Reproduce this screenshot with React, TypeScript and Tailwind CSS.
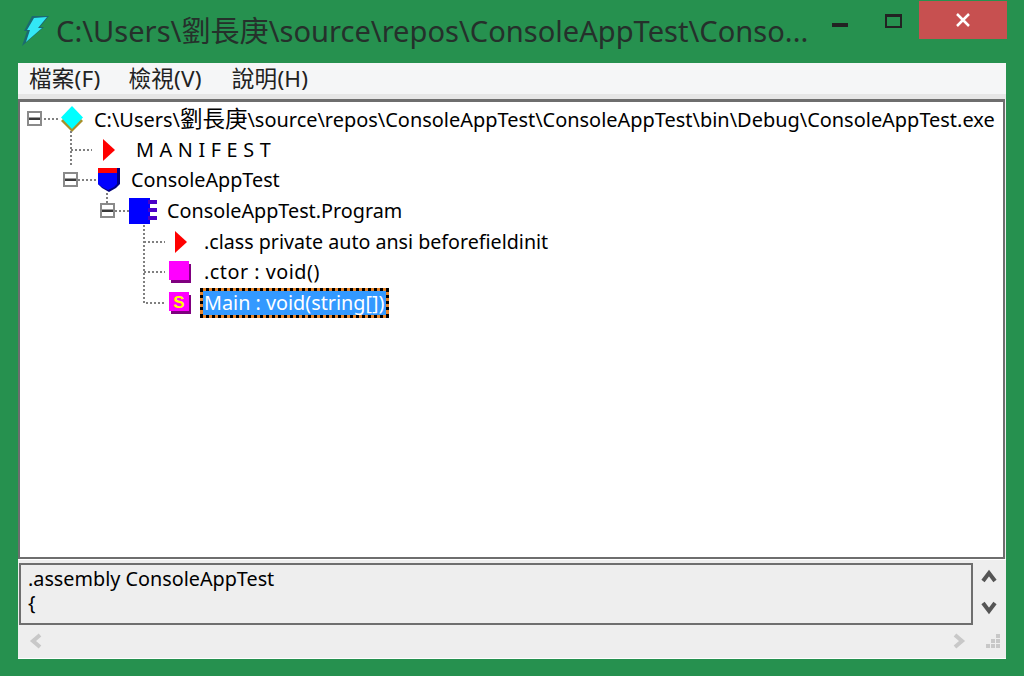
import React from "react";

const rowText = "text-[19.800px] leading-[24px] text-black whitespace-nowrap";

function Minus() {
  return (
    <svg width="16" height="16" viewBox="0 0 16 16" className="shrink-0">
      <rect x="1" y="1" width="13" height="13" fill="#fff" stroke="#8a8a8a" strokeWidth="2" />
      <rect x="2" y="6.500" width="11" height="2.500" fill="#3a3a3a" />
    </svg>
  );
}

function Diamond() {
  return (
    <svg width="24" height="26" viewBox="0 0 24 26">
      <path d="M12 4 L23 15 L12 26 L1 15 Z" fill="#a89028" />
      <path d="M12 0 L23 11.500 L12 23 L1 11.500 Z" fill="#00ffff" />
    </svg>
  );
}

function Arrow() {
  return (
    <svg width="12" height="22" viewBox="0 0 12 22">
      <path d="M0 0 L12 11 L0 22 Z" fill="#ff0000" />
    </svg>
  );
}

function Shield() {
  return (
    <svg width="24" height="26" viewBox="0 0 24 26">
      <path d="M1 1 H23 V17 L19 21 L12 25 L5 21 L1 17 Z" fill="#00007f" />
      <path d="M1 1 H20 V17 L17 20 L11 23 L5 20 L1 17 Z" fill="#0000ff" />
      <rect x="1" y="1" width="19" height="5" fill="#ff0000" />
    </svg>
  );
}

function ClassIcon() {
  return (
    <svg width="30" height="28" viewBox="0 0 30 28">
      <rect x="1" y="1" width="21" height="26" fill="#0000ff" />
      <rect x="20" y="3" width="9" height="4" fill="#4a00c8" />
      <rect x="20" y="11" width="9" height="4" fill="#4a00c8" />
      <rect x="20" y="19" width="9" height="4" fill="#4a00c8" />
    </svg>
  );
}

function Method({ statik }: { statik?: boolean }) {
  return (
    <svg width="22" height="22" viewBox="0 0 22 22">
      <rect x="2" y="3" width="20" height="19" fill="#7f007f" />
      <rect x="0" y="0" width="20" height="19" fill="#ff00ff" />
      {statik && (
        <text x="10" y="15.500" textAnchor="middle" fontSize="17" fontWeight="700" fill="#ffff00" fontFamily="Liberation Sans, sans-serif">
          S
        </text>
      )}
    </svg>
  );
}

function TreeLines() {
  return (
    <svg width="300" height="230" viewBox="0 0 300 230" className="absolute left-0 top-0 pointer-events-none">
      <g stroke="#808080" strokeWidth="2" strokeDasharray="2 2" fill="none">
        <path d="M24 17 H40" />
        <path d="M51 29 V64 M51 48 H72" />
        <path d="M58 78 H76" />
        <path d="M87 91 V103 M95 109 H109" />
        <path d="M124 123 V201 H145 M124 140 H145 M124 170 H145" />
      </g>
    </svg>
  );
}

function Row({ pad, icon, iconW, gap, children, minus }: { pad: string; icon: React.ReactNode; iconW: string; gap: string; children: React.ReactNode; minus?: boolean }) {
  return (
    <div className={`h-[30.600px] flex items-center ${pad}`}>
      {minus && <Minus />}
      <div className={`flex justify-center items-center shrink-0 ${iconW} ${gap}`}>{icon}</div>
      {children}
    </div>
  );
}

export default function App() {
  return (
    <div className="w-[1024px] h-[676px] bg-[#26914f] flex flex-col overflow-hidden" style={{ fontFamily: '"Noto Sans", "Noto Sans CJK TC", sans-serif' }}>
      <div className="h-[63px] shrink-0 flex items-start relative">
        <svg width="30" height="32" viewBox="0 0 30 32" className="ml-[21px] mt-[15px] shrink-0">
          <path d="M11 1 L28 1 L19 12 L23 12 L1 31 L6 16 L3 16 Z" fill="#1b6a70" />
          <path d="M13 3 L26 2 L17 13 L21 13 L5 27 L9 15 L6 15 Z" fill="#33e8f5" />
        </svg>
        <div className="ml-[5px] mt-[10px] text-[29.100px] leading-[42px] text-[#25302b] whitespace-nowrap">
          C:\Users\劉長庚\source\repos\ConsoleAppTest\Conso...
        </div>
        <div className="absolute right-[17px] top-[1px] flex items-start">
          <svg width="20" height="30" viewBox="0 0 20 30" className="mr-[34px]">
            <rect x="2" y="22" width="16" height="4" fill="#222" />
          </svg>
          <svg width="20" height="20" viewBox="0 0 20 20" className="mr-[15px] mt-[12px]">
            <rect x="2" y="2" width="15" height="12" fill="none" stroke="#222" strokeWidth="2" />
            <rect x="1" y="1" width="17" height="3" fill="#222" />
          </svg>
          <div className="w-[88px] h-[38px] bg-[#c75050] flex items-center justify-center">
            <svg width="14" height="14" viewBox="0 0 14 14">
              <path d="M1 1 L13 13 M13 1 L1 13" stroke="#fff" strokeWidth="2.500" />
            </svg>
          </div>
        </div>
      </div>

      <div className="mx-[18px] w-[988px] h-[596px] flex flex-col bg-[#eeeeee] border-b border-white">
        <div className="h-[36px] shrink-0 bg-[#e6e6e6]">
          <div className="h-[31px] bg-[#f5f6f7] flex items-center pl-[11px] gap-[28px] text-[22.600px] tracking-[0.200px] text-[#222]">
            <span>檔案(F)</span>
            <span>檢視(V)</span>
            <span className="ml-[2px]">說明(H)</span>
          </div>
        </div>
        <div className="h-[460px] shrink-0 bg-white border-2 border-[#6e6e6e] border-t-[3px] relative pt-[2px] overflow-hidden mr-[1px]">
          <TreeLines />
          <Row pad="pl-[7px]" minus icon={<Diamond />} iconW="w-[24px]" gap="ml-[17px] mr-[10px]">
            <span className="text-[19.950px] leading-[24px] text-black whitespace-nowrap">
              C:\Users\<span className="text-[22.500px]">劉長庚</span>\source\repos\ConsoleAppTest\ConsoleAppTest\bin\Debug\ConsoleAppTest.exe
            </span>
          </Row>
          <Row pad="pl-[83px]" icon={<Arrow />} iconW="w-[12px]" gap="mr-[21px]">
            <span className={`${rowText} tracking-[5.600px]`}>MANIFEST</span>
          </Row>
          <Row pad="pl-[43px]" minus icon={<Shield />} iconW="w-[24px]" gap="ml-[18px] mr-[10px]">
            <span className={rowText}>ConsoleAppTest</span>
          </Row>
          <Row pad="pl-[80px]" minus icon={<ClassIcon />} iconW="w-[30px]" gap="ml-[12px] mr-[9px]">
            <span className={rowText}>ConsoleAppTest.Program</span>
          </Row>
          <Row pad="pl-[155px]" icon={<Arrow />} iconW="w-[12px]" gap="mr-[17px]">
            <span className="text-[19.650px] leading-[24px] text-black whitespace-nowrap">.class private auto ansi beforefieldinit</span>
          </Row>
          <Row pad="pl-[149px]" icon={<Method />} iconW="w-[22px]" gap="mr-[13px]">
            <span className={`${rowText} tracking-[0.500px]`}>.ctor : void()</span>
          </Row>
          <Row pad="pl-[149px]" icon={<Method statik />} iconW="w-[22px]" gap="mr-[9px]">
            <span className="border-[3px] border-dotted border-black bg-[#e8862a]">
              <span className="block text-[19.800px] leading-[24px] text-white bg-[#3399ff] pl-[1px] pr-[2px] whitespace-nowrap">Main : void(string[])</span>
            </span>
          </Row>
        </div>
        <div className="flex h-[65px] shrink-0 pt-[3px] border-t border-white">
          <div className="ml-[1px] w-[954px] h-[62px] shrink-0 border-2 border-[#6e6e6e] bg-[#eeeeee] pl-[7px] pt-[2px] text-[19.800px] leading-[24px] text-black whitespace-pre">
            {".assembly ConsoleAppTest\n{"}
          </div>
          <div className="flex-1 flex flex-col items-center gap-[18px] pt-[6px] pr-[1px]">
            <svg width="16" height="14" viewBox="0 0 16 14"><path d="M2 12 L8 4 L14 12" fill="none" stroke="#555" strokeWidth="4" /></svg>
            <svg width="16" height="14" viewBox="0 0 16 14"><path d="M2 2 L8 10 L14 2" fill="none" stroke="#555" strokeWidth="4" /></svg>
          </div>
        </div>
        <div className="flex-1 flex items-center pl-[11px] pr-[5px]">
          <svg width="14" height="16" viewBox="0 0 14 16"><path d="M11 2 L4 8 L11 14" fill="none" stroke="#c8c8c8" strokeWidth="4" /></svg>
          <div className="flex-1" />
          <svg width="14" height="16" viewBox="0 0 14 16" className="mr-[19px]"><path d="M3 2 L10 8 L3 14" fill="none" stroke="#c8c8c8" strokeWidth="4" /></svg>
          <svg width="16" height="16" viewBox="0 0 16 16" fill="#c8c8c8">
            <rect x="11" y="1" width="4" height="4" />
            <rect x="6" y="6" width="4" height="4" /><rect x="11" y="6" width="4" height="4" />
            <rect x="1" y="11" width="4" height="4" /><rect x="6" y="11" width="4" height="4" /><rect x="11" y="11" width="4" height="4" />
          </svg>
        </div>
      </div>
    </div>
  );
}
